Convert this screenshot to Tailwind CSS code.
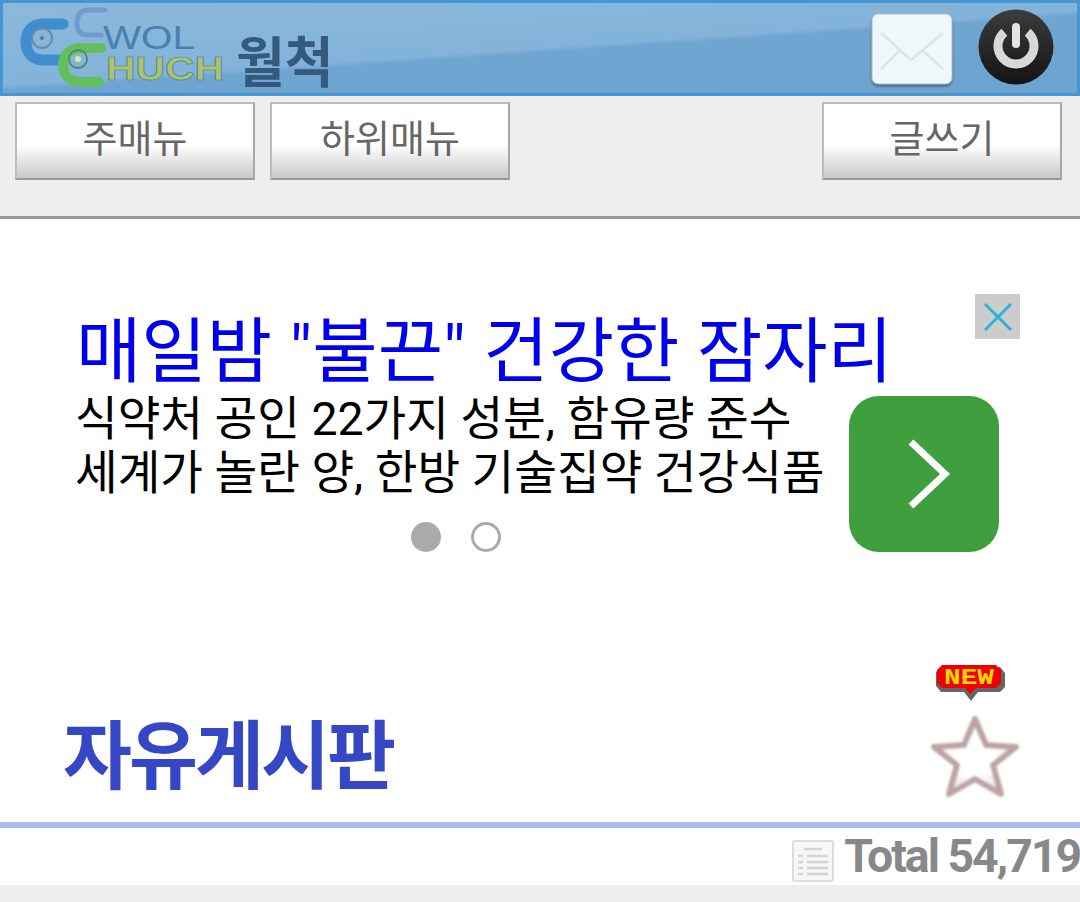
<!DOCTYPE html>
<html lang="ko">
<head>
    <meta charset="utf-8">
    <title>월척 자유게시판</title>
    <script src="https://cdn.jsdelivr.net/npm/@tailwindcss/browser@4"></script>
</head>
<body class="bg-white font-['Roboto','Noto_Sans_CJK_KR',sans-serif] w-[1080px] h-[902px] overflow-hidden">

    <!-- Top bar -->
    <header class="h-[96px] border-[3px] border-[#4596d6] bg-[linear-gradient(176deg,#8bb9dc_0%,#83b3da_50%,#6fa5d1_53%,#6da3cf_100%)] flex items-center justify-between pr-[23px]">
        <svg class="w-[350px] h-[90px] shrink-0" viewBox="0 0 350 90">
            <path d="M60 21 H40 C28 21 23 30 23 39 C23 48 28 57 40 57 H58" fill="none" stroke="#3f8ccf" stroke-width="11" stroke-linecap="round"/>
            <circle cx="39" cy="35" r="10" fill="none" stroke="#6c8aa3" stroke-width="2"/>
            <circle cx="39" cy="35" r="2" fill="#5c7c94"/>
            <path d="M102 7 H85 C77 7 74 13 74 20 C74 27 77 32 85 32 H98" fill="none" stroke="#6f9bcf" stroke-width="5" stroke-linecap="round"/>
            <text x="100" y="46" font-family="Liberation Sans" font-size="33" fill="#4a7fb0" textLength="92" lengthAdjust="spacingAndGlyphs">WOL</text>
            <text x="103" y="77" font-family="Liberation Sans" font-size="34" font-weight="700" fill="#a9c46c" stroke="#4a7f90" stroke-width="0.7" textLength="118" lengthAdjust="spacingAndGlyphs">HUCH</text>
            <path d="M98 45 H78 C66 45 60 53 60 62 C60 71 66 79 78 79 H96" fill="none" stroke="#62bf5c" stroke-width="10" stroke-linecap="round"/>
            <circle cx="75" cy="56" r="9" fill="none" stroke="#4f8a6a" stroke-width="2"/>
            <circle cx="75" cy="56" r="3" fill="#d8e8a0"/>
            <text transform="translate(233 79) scale(1.06 1.1)" font-family="Noto Sans CJK KR" font-weight="700" font-size="50" fill="#345a7e">월척</text>
        </svg>
        <div class="flex items-center gap-[25px]">
            <svg class="w-[82px] h-[72px] mt-[2px] drop-shadow-[0_2px_1px_rgba(60,60,60,0.6)]" viewBox="0 0 82 72">
                <rect x="1" y="1" width="80" height="70" rx="6" fill="#eef7f9" stroke="#b4c2c8"/>
                <path d="M10 20 L40 47 L72 20 M10 56 L28 38 M72 56 L52 38" fill="none" stroke="#dbe6e9" stroke-width="2.5"/>
            </svg>
            <svg class="w-[76px] h-[76px] mb-[2px]" viewBox="0 0 76 76">
                <defs>
                    <linearGradient id="knob" x1="0" y1="0" x2="0" y2="1">
                        <stop offset="0" stop-color="#3c3c3c"/>
                        <stop offset="1" stop-color="#141414"/>
                    </linearGradient>
                </defs>
                <circle cx="38" cy="38" r="37.5" fill="url(#knob)"/>
                <path d="M26.4 23.2 A18 18 0 1 0 49.6 23.2" fill="none" stroke="#d8d8d8" stroke-width="9"/>
                <path d="M38 18 V35" stroke="#e4e4e4" stroke-width="8" stroke-linecap="round"/>
            </svg>
        </div>
    </header>

    <!-- Menu buttons -->
    <nav class="h-[123px] bg-[#eeeeee] border-b-[3px] border-[#999999] flex justify-between items-start pt-[6px] px-[15px] pr-[18px]">
        <div class="flex gap-[15px]">
            <button class="w-[240px] h-[78px] border-[2px] border-[#bdbdbd] border-r-[#a8a8a8] border-b-[#999999] bg-[linear-gradient(#ffffff_0%,#ffffff_55%,#c9c9c9_100%)] text-[38px] text-[#666666] font-['Noto_Sans_CJK_KR',sans-serif] font-normal pb-[12px]">주매뉴</button>
            <button class="w-[240px] h-[78px] border-[2px] border-[#bdbdbd] border-r-[#a8a8a8] border-b-[#999999] bg-[linear-gradient(#ffffff_0%,#ffffff_55%,#c9c9c9_100%)] text-[38px] text-[#666666] font-['Noto_Sans_CJK_KR',sans-serif] font-normal pb-[12px]">하위매뉴</button>
        </div>
        <button class="w-[240px] h-[78px] border-[2px] border-[#bdbdbd] border-r-[#a8a8a8] border-b-[#999999] bg-[linear-gradient(#ffffff_0%,#ffffff_55%,#c9c9c9_100%)] text-[38px] text-[#666666] font-['Noto_Sans_CJK_KR',sans-serif] font-normal pb-[12px]">글쓰기</button>
    </nav>

    <!-- Ad -->
    <section class="relative h-[420px] pl-[76px] pt-[93px]">
        <button class="absolute left-[975px] top-[75px] w-[45px] h-[45px] bg-[#cccccc] flex items-center justify-center">
            <svg class="w-[32px] h-[32px]" viewBox="0 0 32 32"><path d="M3 3 L29 29 M29 3 L3 29" stroke="#2ab5d2" stroke-width="3"/></svg>
        </button>
        <h1 class="text-[#0000ee] text-[71px] leading-[80px] whitespace-nowrap">매일밤 "불끈" 건강한 잠자리</h1>
        <div class="flex">
            <div class="w-[773px] text-[46.4px] leading-[54px] text-black whitespace-nowrap -indent-[1px]">
                <p>식약처 공인 22가지 성분, 함유량 준수</p>
                <p>세계가 놀란 양, 한방 기술집약 건강식품</p>
                <div class="flex justify-center gap-[30px] pt-[22px] pl-[76px] pr-[90px]">
                    <span class="w-[30px] h-[30px] rounded-full bg-[#aaaaaa]"></span>
                    <span class="w-[30px] h-[30px] rounded-full border-[3px] border-[#aaaaaa]"></span>
                </div>
            </div>
            <a class="w-[150px] h-[156px] mt-[4px] pl-[10px] rounded-[30px] bg-[#3f9f3f] flex items-center justify-center">
                <svg class="w-[44px] h-[72px]" viewBox="0 0 44 72"><path d="M4 4 L38 36 L4 68" fill="none" stroke="#ffffff" stroke-width="7"/></svg>
            </a>
        </div>
    </section>

    <!-- Board title -->
    <div class="h-[183px] relative">
        <h2 class="absolute left-[63px] top-[67px] text-[#3547c4] text-[75px] leading-[90px] font-bold tracking-[-3px] font-['Noto_Sans_CJK_KR',sans-serif]">자유게시판</h2>
        <div class="absolute left-[936px] top-[23px]">
            <svg class="w-[69px] h-[40px]" viewBox="0 0 69 40">
                <path d="M5 5 H64 L69 11 V25 L64 30 H42 L35 39 L28 30 H5 L0 24 V10 Z" fill="#666666"/>
                <path d="M6 3 H60 L65 8 V21 L60 26 H40 L34 32 L29 26 H6 L1 21 V8 Z" fill="#f00000"/>
                <text x="33" y="22" text-anchor="middle" font-family="Liberation Mono" font-weight="700" font-size="22" fill="#ffd800" textLength="50" lengthAdjust="spacingAndGlyphs">NEW</text>
            </svg>
        </div>
        <svg class="absolute left-[929px] top-[73px] w-[92px] h-[88px]" viewBox="0 0 92 88">
            <defs>
                <filter id="soft"><feGaussianBlur stdDeviation="0.9"/></filter>
                <radialGradient id="starfill"><stop offset="0.5" stop-color="#ffffff"/><stop offset="1" stop-color="#dfe3e3"/></radialGradient>
            </defs>
            <path d="M46 7 L57 33 L87 35 L64 53 L72 82 L46 67 L20 82 L28 53 L5 35 L35 33 Z" fill="url(#starfill)" stroke="#bda4a4" stroke-width="6" stroke-linejoin="round" filter="url(#soft)"/>
        </svg>
    </div>

    <!-- Total row -->
    <div class="h-[63px] border-t-[6px] border-[#a8bdea] flex justify-end items-center overflow-hidden">
        <svg class="w-[42px] h-[42px] shrink-0 mt-[9px] mr-[10px]" viewBox="0 0 42 42">
            <rect x="1" y="1" width="40" height="40" rx="2" fill="#f7f7f7" stroke="#dddddd" stroke-width="2"/>
            <path d="M12 9 H30 M6 16 H11 M15 16 H36 M6 22 H11 M15 22 H36 M6 28 H11 M15 28 H36 M6 34 H11 M15 34 H36" stroke="#d4d4d4" stroke-width="2.5"/>
        </svg>
        <span class="text-[46.4px] font-bold text-[#888888] tracking-[-2px] leading-none whitespace-nowrap">Total 54,719</span>
    </div>
    <div class="h-[17px] bg-[#eeeeee]"></div>

</body>
</html>
